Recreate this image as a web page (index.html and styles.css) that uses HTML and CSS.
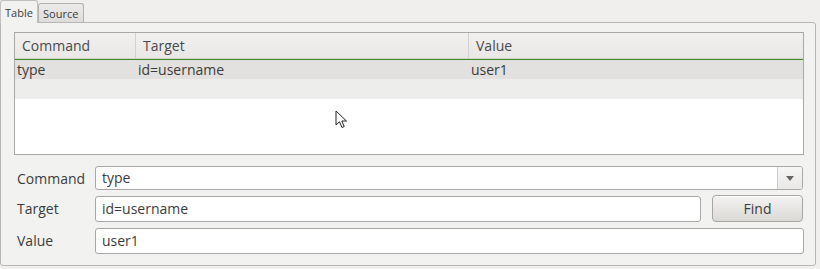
FILE: index.html
```html
<!DOCTYPE html>
<html lang="en">
<head>
  <meta charset="UTF-8" />
  <title>Selenium IDE - Table</title>
  <link rel="stylesheet" href="styles.css">
</head>
<body>
  <!-- tab strip -->
  <div class="tabs">
    <div class="tab active">Table</div>
    <div class="tab">Source</div>
  </div>

  <div class="panel">
    <!-- command table -->
    <div class="grid">
      <div class="grid-head">
        <div class="cell col-cmd">Command</div>
        <div class="cell col-target">Target</div>
        <div class="cell col-value">Value</div>
      </div>
      <div class="grid-row selected">
        <div class="cell col-cmd">type</div>
        <div class="cell col-target">id=username</div>
        <div class="cell col-value">user1</div>
      </div>
      <div class="grid-row empty"></div>

      <!-- mouse pointer sitting over the table -->
      <svg class="pointer" width="13" height="19" viewBox="0 0 13 19">
        <path d="M1 1 L1 15 L4.5 11.8 L7 17.5 L9.2 16.5 L6.8 11 L11.5 11 Z" fill="#fff" stroke="#222" stroke-width="1" stroke-linejoin="round" />
      </svg>
    </div>

    <!-- edit form -->
    <div class="form">
      <label class="form-label">Command</label>
      <div class="combo">
        <div class="combo-text">type</div>
        <div class="combo-arrow"><span></span></div>
      </div>

      <label class="form-label">Target</label>
      <div class="target-line">
        <div class="field tall">id=username</div>
        <button class="find-btn">Find</button>
      </div>

      <label class="form-label">Value</label>
      <div class="field tall value-field">user1</div>
    </div>
  </div>
</body>
</html>
```

FILE: styles.css
```css
/* whole window, ambiance-like grey */
body {
  margin: 0;
  background-color: #f0efee;
  color: #3c3c3c;
  font-family: "Open Sans", "DejaVu Sans", sans-serif;
  font-size: 14px;
  width: 820px;
  height: 269px;
  overflow: hidden;
}

/* tab strip */
.tabs {
  display: flex;
  height: 22px;
  align-items: flex-end;
  position: relative;
  z-index: 2;
}

.tab {
  font-size: 11px;
  height: 19px;
  line-height: 19px;
  padding: 0 5px 0 5px;
  border: 1px solid #b3b2b0;
  border-bottom: none;
  border-radius: 3px 3px 0 0;
  background: linear-gradient(#ecebe9, #dddcda);
  box-sizing: border-box;
}

.tab.active {
  height: 23px;
  line-height: 23px;
  background: #f2f2f1;
  border-color: #c2c1bf;
  margin-bottom: -1px;
  width: 38px;
  padding-left: 4px;
}

.tab + .tab {
  width: 46px;
  padding-left: 4px;
}

/* framed page under the tabs */
.panel {
  width: 816px;
  height: 244px;
  box-sizing: border-box;
  border: 1px solid #b7b6b4;
  border-radius: 0 3px 3px 3px;
  background-color: #f2f2f1;
  padding: 9px 11px 0 13px;
}

/* table */
.grid {
  position: relative;
  height: 123px;
  box-sizing: border-box;
  border: 1px solid #a9a8a6;
  background-color: #fff;
}

.grid-head {
  display: flex;
  height: 25px;
  background: linear-gradient(#f1f0ef, #e9e8e6);
  border-bottom: 1px solid #d4d3d1;
  box-shadow: 0 1px 0 #3f8c22;
  margin-bottom: 1px;
}

.grid-head .cell {
  line-height: 25px;
  padding-left: 7px;
  color: #4a4a4a;
  border-right: 1px solid #d2d1cf;
}

.grid-head .col-value {
  border-right: none;
}

.grid-row {
  display: flex;
  height: 19px;
  line-height: 19px;
}

.grid-row .cell {
  padding-left: 2px;
}

.grid-row.selected {
  background-color: #e2e1df;
}

.grid-row.empty {
  height: 20px;
  background-color: #ededec;
}

.cell {
  box-sizing: border-box;
  white-space: nowrap;
}

.col-cmd { width: 121px; }
.col-target { width: 333px; }
.col-value { flex: 1; }

.pointer {
  position: absolute;
  left: 320px;
  top: 77px;
}

/* form below the table */
.form {
  display: grid;
  grid-template-columns: 81px 1fr;
  row-gap: 5px;
  margin-top: 11px;
  align-items: center;
}

.form-label {
  padding-left: 3px;
}

.combo {
  display: flex;
  height: 24px;
  box-sizing: border-box;
  border: 1px solid #a9a8a6;
  border-radius: 3px;
  background-color: #fff;
  overflow: hidden;
  margin-right: 1px;
}

.combo-text {
  flex: 1;
  line-height: 22px;
  padding-left: 6px;
}

.combo-arrow {
  width: 24px;
  border-left: 1px solid #cfcecc;
  background: linear-gradient(#f6f6f5, #e9e8e6);
  display: flex;
  align-items: center;
  justify-content: center;
}

.combo-arrow span {
  width: 0;
  height: 0;
  border-left: 4px solid transparent;
  border-right: 4px solid transparent;
  border-top: 5px solid #666;
}

.target-line {
  display: flex;
  gap: 11px;
  align-items: center;
}

.field {
  box-sizing: border-box;
  border: 1px solid #a9a8a6;
  border-radius: 3px;
  background-color: #fff;
  padding-left: 6px;
  flex: 1;
}

.field.tall {
  height: 26px;
  line-height: 24px;
}

.value-field {
  margin-top: 1px;
}

.find-btn {
  width: 91px;
  height: 27px;
  margin-right: 1px;
  font-family: inherit;
  font-size: 14px;
  color: #3c3c3c;
  border: 1px solid #a7a6a4;
  border-radius: 4px;
  background: linear-gradient(#f4f3f2, #dad9d6);
  box-shadow: inset 0 1px 0 #fff;
}
```
